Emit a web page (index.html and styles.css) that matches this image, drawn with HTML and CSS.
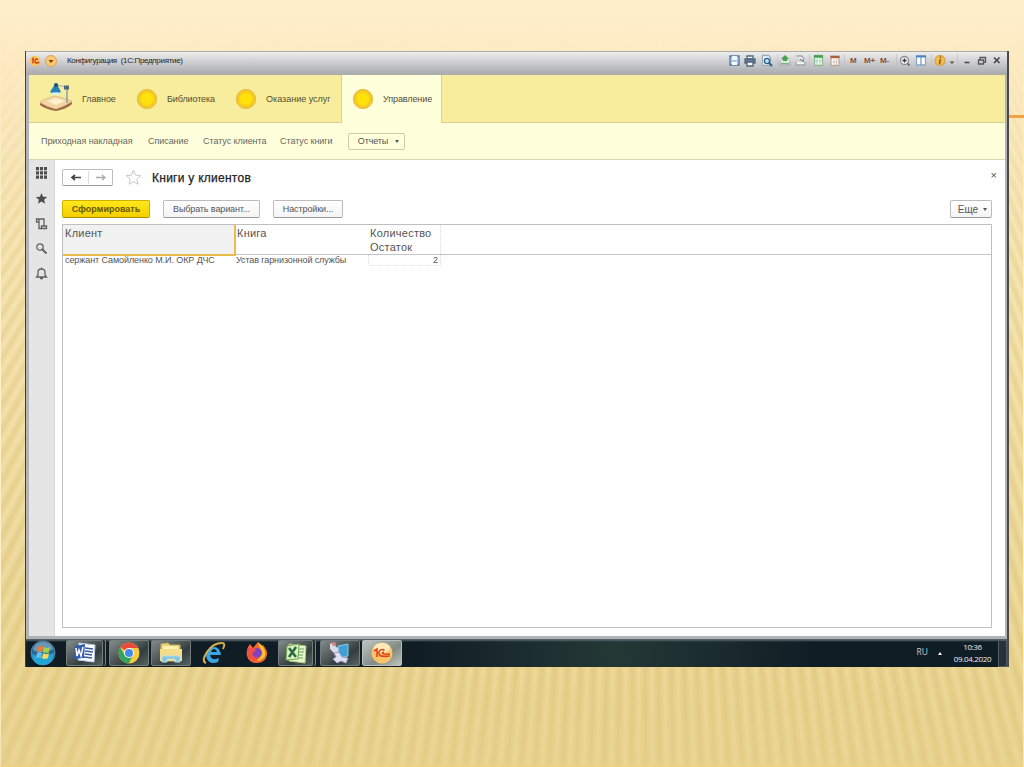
FILE: index.html
```html
<!DOCTYPE html>
<html lang="ru">
<head>
<meta charset="utf-8">
<title>Книги у клиентов</title>
<link rel="stylesheet" href="styles.css">
</head>
<body>
<div class="rays"></div>
<div class="accent"></div>
<main class="screen">
  <header class="titlebar">
    <svg class="app-logo" width="28" height="14" viewBox="0 0 28 14"><circle cx="6" cy="7" r="5.3" fill="#fbc65c"/><path d="M3 5.5l1-1v5M9 5.5q-3-1.500-3 1.500t3 1.500h1.500" fill="none" stroke="#d83a16" stroke-width="1.400"/><circle cx="22" cy="7" r="5.500" fill="#fbc873" stroke="#e5a048"/><path d="M19.500 6h5L22 9z" fill="#70410d"/></svg>
    <span class="title-text">Конфигурация&nbsp; (1С:Предприятие)</span>
    <svg class="tools" width="280" height="20" viewBox="724 50 280 20">
      <g fill="none" stroke-width="1.300">
        <path d="M730 56h9v9h-9z" fill="#a9c8e6" stroke="#56789f"/><path d="M732 56h5v4h-5z" fill="#eef6ff" stroke="none"/><path d="M732 62h5v3h-5z" fill="#fff" stroke="none"/>
        <path d="M747 56h6v3h-6z" fill="#fff" stroke="#526a83"/><path d="M745 59h10v4h-10z" fill="#5d7f9b" stroke="#4f687f"/><path d="M747 62h6v4h-6z" fill="#fff" stroke="#51677c"/>
        <path d="M762.500 55.500h6l2 2v8h-8z" fill="#f7fbff" stroke="#9aabc0"/><circle cx="767" cy="61" r="2.600" fill="#bfe1f2" stroke="#2d5f87"/><path d="M769 63l3 3" stroke="#2d5f87" stroke-width="2"/>
        <path d="M780 61v4h10v-4" fill="#e5e9ee" stroke="#a8afb9"/><path d="M783 59h-2l4-4 4 4h-2v2h-4z" fill="#46a04e"/><path d="M781 63.500h8" stroke="#76b875"/>
        <path d="M796.500 56h5l2 2v3M796 62v3h9v-3" fill="#f4f4f5" stroke="#a1a2a8"/><path d="M800 59l4 3" stroke="#85878e"/>
        <path d="M814.500 55.500h8v10h-8z" fill="#f4fff3" stroke="#92b795"/><path d="M814 56.500h9" stroke="#3fa250" stroke-width="2.500"/><path d="M817 58v7M820 58v7M815 61h8" stroke="#a3cba5" stroke-width=".8"/>
        <path d="M831 56.500h8v9h-8z" fill="#fff" stroke="#bda99a"/><path d="M830.500 57h9" stroke="#a86143" stroke-width="2.500"/><path d="M834 59v6M836.500 59v6M831 62h8" stroke="#ceb9aa" stroke-width=".8"/>
        <circle cx="904.500" cy="60.500" r="4" fill="#f4f4f5" stroke="#8b8b90"/><path d="M902.500 60.500h4M904.500 58.500v4" stroke="#333"/><path d="M907.500 63.500l2 2" stroke="#555" stroke-width="1.500"/>
        <path d="M916.500 56h9v9h-9z" fill="#fff" stroke="#86a8ca"/><path d="M916 56.500h10" stroke="#4b86bd" stroke-width="2"/><path d="M921 57v8" stroke="#7d9ebd"/>
        <circle cx="940" cy="60.500" r="5" fill="#f5bd52" stroke="#dba44b"/><path d="M940.500 59l-1 5M940.500 56.500v1.500" stroke="#8a6018" stroke-width="1.600"/>
        <path d="M949.500 61.500h5l-2.500 2.500z" fill="#555"/><path d="M964.500 62.500h5" stroke="#444" stroke-width="1.500"/>
        <path d="M978.500 60h5v4h-5zM980 59.500v-2h5.500v4.500h-1.500" stroke="#555"/><path d="M994 57.500l5.500 5.500m0-5.500l-5.500 5.500" stroke="#444" stroke-width="1.600"/>
        <path d="M777.500 54v12M809.500 54v12M844.500 54v12M896.500 54v12M931.500 54v12M957.500 54v12" stroke="#bdbdc2" stroke-width=".7"/>
      </g>
      <g class="memory"><text x="850" y="63">M</text><text x="864" y="63">M+</text><text x="880" y="63">M-</text></g>
    </svg>
  </header>
  <div class="app">
    <nav class="sections">
      <a class="section main-section"><svg width="34" height="30" viewBox="0 0 34 30"><path d="M1 21l16 6 16-7v2q-5 5-16 7Q6 27 1 23z" fill="#9a6a48"/><path d="M1 20q6-4 15-6 9 2 17 5-6 5-16 8Q7 25 1 20z" fill="#f3d5a6" stroke="#d5aa77" stroke-width=".6"/><path d="M8 19l9-3 9 3-9 4z" fill="#fff0cc"/><path d="M28 7v14" stroke="#879eaa" stroke-width="1.500"/><path d="M17 3l11 2" stroke="#9cb3bb" stroke-width="1.200"/><path d="M16 2l-5 8q6 4 11 0l-4-8z" fill="#2683b1"/><circle cx="17" cy="3" r="2" fill="#1e5478"/><path d="M25 3.500h5v4h-5z" fill="#4b6b7c"/><ellipse cx="17" cy="11.500" rx="4.500" ry="1.300" fill="#d0f2f6"/></svg><span>Главное</span></a>
      <a class="section library"><i class="coin"></i><span>Библиотека</span></a>
      <a class="section services"><i class="coin"></i><span>Оказание услуг</span></a>
      <a class="section active"><i class="coin"></i><span>Управление</span></a>
    </nav>
    <nav class="commands">
      <span class="c1">Приходная накладная</span><span class="c2">Списание</span><span class="c3">Статус клиента</span><span class="c4">Статус книги</span><button class="reports">Отчеты<b class="caret"></b></button>
    </nav>
    <div class="workspace">
      <aside class="sidebar">
        <svg width="13" height="13" viewBox="0 0 13 13"><path d="M1 0h3v3.300H1zM5 0h3v3.300H5zM9 0h3v3.300H9zM1 4.200h3v3.300H1zM5 4.200h3v3.300H5zM9 4.200h3v3.300H9zM1 8.400h3v3.300H1zM5 8.400h3v3.300H5zM9 8.400h3v3.300H9z" fill="#4e4e4e"/></svg>
        <svg width="13" height="13" viewBox="0 0 13 13"><path d="M6.500 1l1.600 3.800 4.100.3-3.100 2.700 1 4-3.600-2.200L2.900 11.800l1-4L.8 5.100l4.100-.3z" fill="#4e4e4e"/></svg>
        <svg width="13" height="13" viewBox="0 0 13 13" fill="none" stroke="#606060" stroke-width="1.300"><path d="M3.500 5H1.500V2h7.500v7h2.500v2.500h-7.500V2M6.500 11.500V9H9"/></svg>
        <svg width="13" height="13" viewBox="0 0 13 13" fill="none" stroke="#606060"><circle cx="5" cy="5" r="3.200" stroke-width="1.300"/><path d="M7.500 7.500l4 4" stroke-width="2"/></svg>
        <svg width="13" height="13" viewBox="0 0 13 13" fill="none" stroke="#606060" stroke-width="1.300"><path d="M1.500 10h10L10 8V5Q10 2 6.500 2T3 5v3zM5 11.500h3M6.500.5v1.500"/></svg>
      </aside>
      <section class="document">
        <div class="heading">
          <div class="history"><svg width="50" height="15" viewBox="0 0 50 15"><path d="M9 7.500h9M12 5L9 7.500l3 2.500" fill="none" stroke="#444" stroke-width="1.700"/><path d="M25.500 1v13" stroke="#ddd"/><path d="M33 7.500h9M39 5l3 2.500-3 2.500" fill="none" stroke="#aaa" stroke-width="1.300"/></svg></div>
          <svg class="favorite" width="17" height="17" viewBox="0 0 17 17"><path d="M8.500 1l2 5.200 5.300.4-4 3.500 1.200 5.200-4.500-2.800L4 15.300l1.200-5.200-4-3.500 5.300-.4z" fill="none" stroke="#c3c3c3" stroke-width=".9"/></svg>
          <h1>Книги у клиентов</h1><span class="close">×</span>
        </div>
        <div class="actions"><button class="generate">Сформировать</button><button class="variant">Выбрать вариант...</button><button class="settings">Настройки...</button><button class="more">Еще<b class="caret"></b></button></div>
        <div class="report">
          <div class="report-head"><div class="client selected"><span>Клиент</span></div><div class="book"><span>Книга</span></div><div class="amount"><span>Количество<br>Остаток</span></div></div>
          <div class="report-row"><div class="client"><span>сержант Самойленко М.И. ОКР ДЧС</span></div><div class="book"><span>Устав гарнизонной службы</span></div><div class="amount"><span>2</span></div></div>
        </div>
      </section>
    </div>
  </div>
  <footer class="taskbar">
    <div class="start"><svg width="28" height="28" viewBox="0 0 28 28"><circle cx="14" cy="14" r="12" fill="#246b9c" stroke="#61849a"/><path d="M3 15q10 5 22-1-1 11-11 12T3 15" fill="#20a5d7"/><path d="M4 11Q6 3 14 3t10 7q-10 6-20 1" fill="#a6bdc8" opacity=".55"/><path d="M9 8q3-2 5 0l-1 5q-2-1-5 0z" fill="#ef7833"/><path d="M15 8q3 2 6 0l-1 5q-3 2-6 0z" fill="#9cd34b"/><path d="M8 14q3-2 5 0l-1 5q-2-1-5 0z" fill="#62c2ed"/><path d="M14 14q3 2 6 0l-1 5q-3 2-6 0z" fill="#fbd65a"/></svg></div>
    <div class="task word stacked"><svg width="24" height="22" viewBox="0 0 24 22"><path d="M6 1l16 2-1 17-16-2z" fill="#fff" stroke="#b9cbe7"/><path d="M12 6l8 1M12 9l8 1M12 12l7 1M11 15l8 1" stroke="#345b9e" stroke-width="1.500"/><path d="M2 4l10-2-1 14-10 1z" fill="#345caf"/><path d="M3 6l1 8 2-6 2 6 2-9" fill="none" stroke="#fff" stroke-width="1.500"/></svg></div>
    <div class="task chrome"><svg width="24" height="24" viewBox="0 0 24 24"><circle cx="12" cy="12" r="10.500" fill="#f7cb42"/><path d="M12 12L3 6Q7 1.500 12 1.500T21.500 7H12z" fill="#e94b3c"/><path d="M3 6Q-1 13 5 20q3 3 7 2l4-8-9-1z" fill="#34a35b"/><circle cx="12" cy="12" r="5" fill="#fff"/><circle cx="12" cy="12" r="4" fill="#4589ea"/></svg></div>
    <div class="task folder"><svg width="26" height="24" viewBox="0 0 26 24"><path d="M3 3l7-1 2 2h10v16H3z" fill="#eed37b" stroke="#c8ab5d"/><path d="M5 5h15v10H5z" fill="#fff2ac"/><path d="M2 8h22v12H2z" fill="#f5dc8a"/><path d="M4 21v-6h18v6h-5v-3H9v3z" fill="#83c5dc" stroke="#b7e2ec"/></svg></div>
    <div class="pinned ie"><svg width="24" height="24" viewBox="0 0 24 24"><path d="M19 14H8q1 5 6 4l3-1-1 4q-8 3-11-3T8 7q9-4 11 7M9 11h6q-1-3-3-3t-3 3" fill="#38a7e4"/><path d="M4 22Q-1 20 5 11T20 2q4 0 1 6" fill="none" stroke="#d2b04d" stroke-width="2"/></svg></div>
    <div class="pinned firefox"><svg width="24" height="24" viewBox="0 0 24 24"><path d="M3 6l2-3 3 4 5-6q2 2 3 4l2-1q5 6 4 10-2 8-10 8T2 15q-1-4 1-9" fill="#f46631"/><path d="M13 1q9 7 7 14-3 5-8 5l5-9q-3-5-4-10" fill="#fbc32c"/><circle cx="12" cy="12" r="5" fill="#7f43bb"/><path d="M3 7q5-1 8 2l-4 4q2 5 8 3-4 6-10 2-4-4-2-11" fill="#f44e49"/></svg></div>
    <div class="task excel stacked"><svg width="24" height="23" viewBox="0 0 24 23"><path d="M5 2l17 2-1 17-16-2z" fill="#e8f5cf" stroke="#a4d079"/><path d="M15 7h5M15 10h5M14 13h5M14 16h5" stroke="#61a258"/><path d="M3 4l12-2-1 15-12 1z" fill="#deefc5" stroke="#6fa951"/><path d="M5 6l7 9M12 5l-7 10" stroke="#286c39" stroke-width="2.500"/></svg></div>
    <div class="task network"><svg width="24" height="24" viewBox="0 0 24 24"><path d="M2 3l4-2 2 5 4 1-1 5-4 1-5-5z" fill="#ddd9e7"/><path d="M10 5l10-2v12l-9 2z" fill="#43a0d6" stroke="#8acbe9"/><path d="M6 12l5-1 3 5 6 1-2 5-5-2-4 2-4-4 3-2z" fill="#dedff0" stroke="#9b9cc2"/><circle cx="6" cy="3" r="2" fill="#c9877f"/></svg></div>
    <div class="task one-c current"><svg width="24" height="24" viewBox="0 0 24 24"><circle cx="12" cy="12" r="10.500" fill="#f9c36a"/><ellipse cx="12" cy="7" rx="8" ry="5" fill="#fee9b9"/><path d="M4 10l3-2v8M14.500 9.500q-2-2-4.500 0t0 5q2 1.500 10 .5M14 11.500q-2-.5-1.500.8t7.500.7" fill="none" stroke="#dc451c" stroke-width="1.600"/></svg></div>
    <div class="tray"><span class="lang">RU</span><span class="up"></span><div class="clock">10:36<br>09.04.2020</div><div class="peek"></div></div>
  </footer>
</main>
</body>
</html>
```
FILE: styles.css
```css
* { box-sizing: border-box; }
body { margin: 0; width: 1024px; height: 767px; overflow: hidden; position: relative; font: 9px "Liberation Sans", sans-serif; color: #555; background: linear-gradient(#feeecb 0, #fdebc3 70px, #f1dfa6 390px, #e8d28e 700px); padding: 51px 15px 100px 25px; }
.rays { position: absolute; inset: 0; background: repeating-conic-gradient(from 0deg at 640px -700px, rgba(200,168,82,.22) 0deg, rgba(255,235,185,.25) .27deg, rgba(200,168,82,.22) .54deg); -webkit-mask-image: linear-gradient(transparent 25px, #000 260px, #000 620px, rgba(0,0,0,.6) 767px); mask-image: linear-gradient(transparent 25px, #000 260px, #000 620px, rgba(0,0,0,.6) 767px); border: 1px solid #fff0c9; border-bottom-color: #f5d367; }
.accent { position: absolute; right: 0; top: 115px; width: 20px; height: 3px; background: #f1a347; }
.screen { position: relative; width: 984px; height: 616px; display: flex; flex-direction: column; background: #b2b3b7; border-left: 1px solid #3e4144; border-right: 2px solid #4a4a4a; }
.titlebar { height: 24px; display: flex; border-top: 1px solid #aaa; background: linear-gradient(#eee 0, #d8d8da 30%, #b4b5b9 80%, #aaa 100%); }
.app-logo { margin: 2px 0 0 3px; }
.title-text { margin: 4px 0 0 10px; font-size: 8px; line-height: 10px; letter-spacing: -.32px; color: #222; white-space: nowrap; }
.tools { margin: -2px 3px 0 auto; }
.memory { font: bold 8px "Liberation Sans", sans-serif; fill: #83503b; letter-spacing: -.2px; }
.app { height: 561px; margin: 0 2px 0 3px; background: #fff; display: flex; flex-direction: column; }
.sections { display: flex; height: 48px; background: #f8ed9c; border-bottom: 1px solid #d9cf90; color: #554d31; }
.section { display: flex; align-items: center; white-space: nowrap; }
.main-section { width: 108px; padding-left: 10px; gap: 9px; }
.main-section svg { margin-bottom: 4px; }
.library { width: 99px; gap: 10px; }
.services { width: 105px; gap: 10px; }
.active { width: 101px; height: 48px; padding-left: 11px; gap: 10px; background: #ffffdc; border: solid #dcd18d; border-width: 0 1px; }
.section span { letter-spacing: -.1px; }
.services span { letter-spacing: 0; }
.coin { width: 20px; height: 20px; border-radius: 50%; background: #ffe10b; border: 3px solid #f6c923; box-shadow: inset 0 0 0 1px #fbd213; outline: 1px solid #dfbd50; outline-offset: -1px; }
.commands { height: 37px; display: flex; align-items: center; background: #ffffdc; border-bottom: 1px solid #d8d8b7; padding-left: 12px; color: #68675d; white-space: nowrap; letter-spacing: -.06px; }
.c1 { width: 107px; }.c2 { width: 55px; }.c3 { width: 77px; }.c4 { width: 68px; }
button { display: flex; align-items: center; justify-content: center; padding: 0; font: 9px "Liberation Sans", sans-serif; color: #555; background: linear-gradient(#fff, #f4f4f4); border: 1px solid #bcbcbc; border-bottom-color: #999; border-radius: 2px; height: 18px; white-space: nowrap; }
.reports { width: 57px; height: 17px; background: transparent; border-color: #d1cda2; gap: 7px; padding-left: 4px; letter-spacing: -.1px; }
.caret { border: 2px solid transparent; border-top: 3px solid #555; border-bottom: 0; }
.workspace { display: flex; flex: 1; }
.sidebar { width: 26px; background: #e5e5e5; border-right: 1px solid #d8d8d8; display: flex; flex-direction: column; align-items: center; padding-top: 7px; gap: 12px; }
.document { flex: 1; padding: 8px 13px 8px 7px; }
.heading { display: flex; height: 18px; align-items: center; }
.history { width: 51px; height: 17px; border: 1px solid #bcbcbc; border-bottom-color: #999; border-radius: 2px; }
.favorite { margin-left: 12px; }
h1 { margin: 1px auto 0 10px; font: 12px "Liberation Sans", sans-serif; letter-spacing: .26px; color: #222; -webkit-text-stroke: .25px #222; }
.close { margin: -4px -5px 0 0; font-size: 11px; }
.actions { display: flex; margin-top: 14px; height: 25px; }
.generate { width: 88px; background: linear-gradient(#ffe81b, #f5cf00); border-color: #ceb000; border-bottom-color: #aa9000; font-weight: bold; color: #665900; }
.variant { width: 97px; margin-left: 13px; letter-spacing: -.12px; }.settings { width: 70px; margin-left: 13px; letter-spacing: -.1px; }
.more { width: 42px; margin-left: auto; gap: 5px; font-size: 10px; padding-left: 3px; }
.report { height: 404px; border: 1px solid #bfbfbf; margin-top: -1px; }
.report-head, .report-row { display: flex; }
.report-head { height: 30px; border-bottom: 1px solid #c4c4c4; font-size: 11px; line-height: 14px; }
.report-head div { padding: 1px 2px; }
.client { width: 173px; }.book { width: 132px; }.amount { width: 73px; }
.report-head .book { padding-left: 1px; }
.report-head .amount { border-right: 1px dotted #ddd; padding-left: 2px; }
.report-head .selected { height: 31px; background: #f1f1f1; border-right: 2px solid #e9bd49; border-bottom: 2px solid #e9bd49; }
.report-head span { letter-spacing: .24px; }
.report-row { height: 11px; line-height: 11px; white-space: nowrap; }
.report-row .client { padding-left: 2px; }
.report-row .client span { letter-spacing: -.08px; }
.report-row .book span { letter-spacing: -.1px; }
.report-row .amount { text-align: right; padding-right: 2px; border: 1px dotted #ddd; border-top: 0; }
.taskbar { margin-top: 3px; height: 28px; display: flex; background: linear-gradient(#536167 0 1px, transparent 3px), radial-gradient(circle at 60% 40%, #243936 0, transparent 34%), #111d25; }
.start { width: 40px; padding: 0 3px; }
.task { height: 26px; margin-top: 1px; width: 40px; display: flex; align-items: center; justify-content: center; border: 1px solid #747d7e; border-radius: 2px; background: linear-gradient(145deg, #848c8b, #343d3d 65%, #566360); }
.word { width: 37px; }.chrome { margin-left: 6px; }.folder { margin-left: 2px; }
.stacked { box-shadow: 2px 0 #1e2928, 3px 0 #798481; }
.pinned { display: flex; align-items: center; justify-content: center; width: 43px; }
.ie { margin-left: 1px; }.excel { width: 35px; }.network { margin-left: 7px; }.current { margin-left: 2px; background: linear-gradient(145deg, #bdc5c0, #828a86 60%, #c0c5bb); border-color: #b8bdba; }
.tray { margin-left: auto; display: flex; align-items: center; color: #eee; font: 8px "Open Sans", sans-serif; }
.lang { font-size: 8.500px; margin: -3px 10px 0 0; color: #c5cacf; }
.up { border: 2px solid transparent; border-bottom: 3px solid #fff; border-top: 0; margin-right: 11px; }
.clock { text-align: center; line-height: 12px; width: 39px; white-space: nowrap; letter-spacing: -.35px; }
.peek { width: 9px; margin-left: 6px; height: 27px; border: 1px solid #535c63; background: #26313a; }
```
